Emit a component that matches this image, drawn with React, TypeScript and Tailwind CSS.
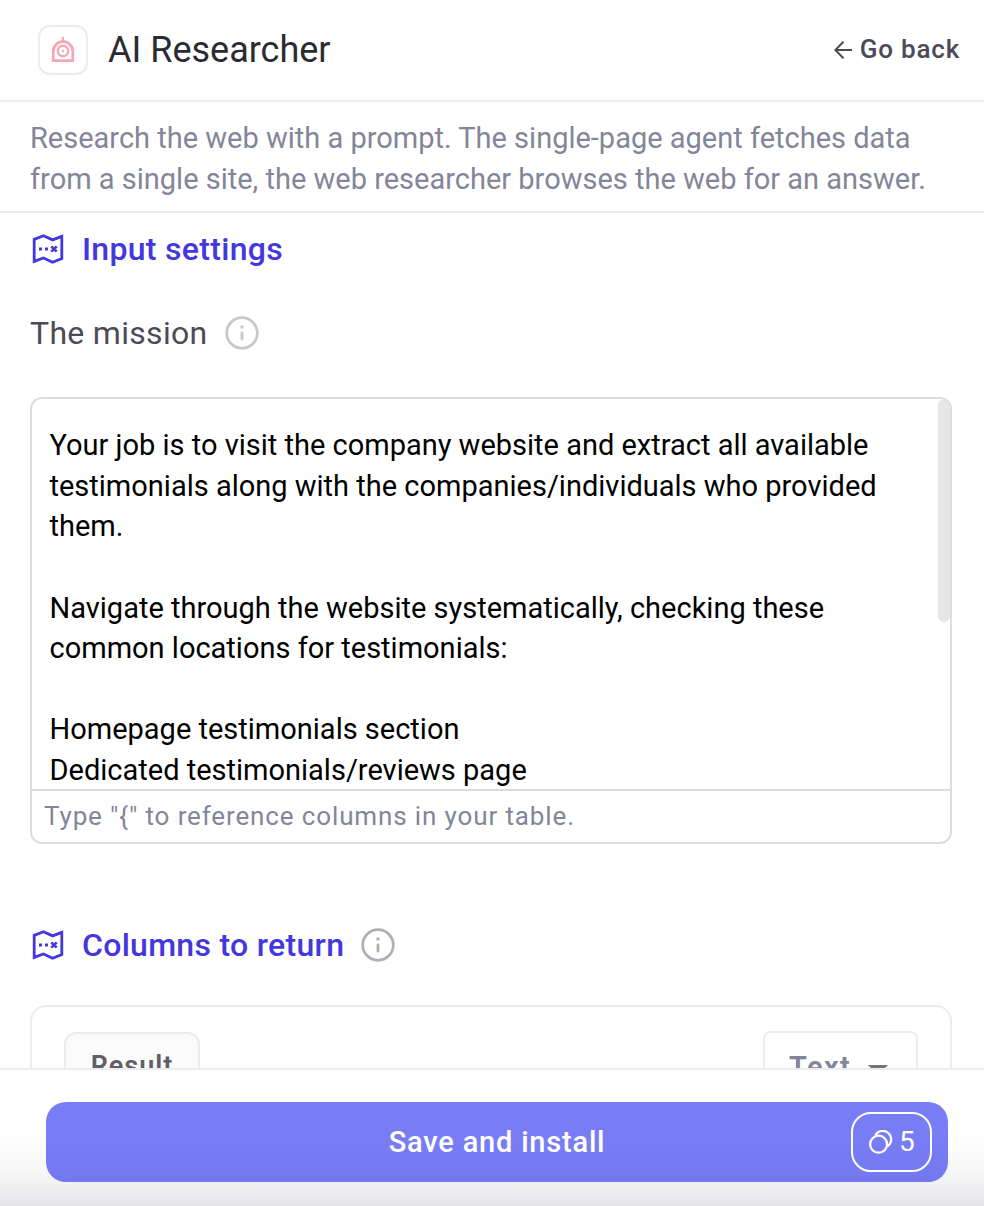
const mission = [
  'Your job is to visit the company website and extract all available',
  'testimonials along with the companies/individuals who provided',
  'them.',
  '',
  'Navigate through the website systematically, checking these',
  'common locations for testimonials:',
  '',
  'Homepage testimonials section',
  'Dedicated testimonials/reviews page',
].join('\n');

function RobotIcon() {
  return (
    <svg width="24" height="26" viewBox="0 0 24 26" fill="none" stroke="#f7a6b4" strokeWidth="2">
      <path d="M12 0V5" strokeWidth="2.2" />
      <path d="M2.2 23.6V14.5a9.8 9.8 0 0 1 19.6 0V23.6z" strokeWidth="2.8" />
      <circle cx="12" cy="14" r="5.2" strokeWidth="2.4" />
      <circle cx="12" cy="14" r="1.2" fill="#f7a6b4" stroke="none" />
    </svg>
  );
}

function MapIcon() {
  return (
    <svg width="32" height="32" viewBox="0 0 32 32" fill="none" stroke="#4338e0">
      <path d="M2.2 6.4L11.5 2.8L20.6 6.9L29.8 3.4V25.5L20.6 29.2L11.5 25L2.2 28.4z" strokeWidth="2.8" />
      <path d="M7 16h3M13 16h3" strokeWidth="2.8" />
      <path d="M19.3 13.3l5.4 5.4M24.7 13.3l-5.4 5.4" strokeWidth="2.6" />
    </svg>
  );
}

function InfoIcon({ color }: { color: string }) {
  return (
    <svg width="34" height="34" viewBox="0 0 34 34" fill="none" stroke={color}>
      <circle cx="17" cy="17" r="15.3" strokeWidth="2.7" />
      <circle cx="17" cy="11" r="1.7" fill={color} stroke="none" />
      <path d="M17 17v6" strokeWidth="2.8" strokeLinecap="round" />
    </svg>
  );
}

export default function App() {
  return (
    <div className="flex h-[1206px] w-[984px] flex-col overflow-hidden bg-white font-['Roboto',sans-serif]">
      <header className="flex h-[102px] shrink-0 items-center border-b-2 border-[#ebebf0] pr-6 pl-[38px]">
        <div className="flex size-[50px] items-center justify-center rounded-xl border-2 border-[#ebebf0]">
          <RobotIcon />
        </div>
        <h1 className="ml-5 text-[36px] leading-10 text-[#2b2b33]">AI Researcher</h1>
        <button className="mb-0.5 ml-auto flex items-center text-[26px] leading-8 font-medium tracking-[0.8px] text-[#4b4b57]">
          <svg className="mt-0.5 mr-2" width="18" height="18" viewBox="0 0 18 18" fill="none" stroke="#4b4b57" strokeWidth="2">
            <path d="M18 9H1.5M9.5 0.8L1.3 9l8.2 8.2" />
          </svg>
          Go back
        </button>
      </header>

      <p className="h-[111px] shrink-0 border-b-2 border-[#ebebf0] pt-4 pl-[30px] text-[29px] leading-[41px] whitespace-pre text-[#83869a]">
        {'Research the web with a prompt. The single-page agent fetches data\nfrom a single site, the web researcher browses the web for an answer.'}
      </p>

      <main className="flex h-[855px] shrink-0 flex-col overflow-hidden px-8 pl-[30px]">
        <div className="mt-4 flex h-10 shrink-0 items-center pl-0.5">
          <MapIcon />
          <h2 className="ml-[18px] text-[32px] leading-10 font-medium tracking-[0.3px] text-[#4338e0]">Input settings</h2>
        </div>
        <div className="mt-11 flex h-10 shrink-0 items-center">
          <span className="text-[32px] leading-10 tracking-[0.3px] text-[#4b4b57]">The mission</span>
          <span className="ml-[17px]"><InfoIcon color="#c6c6cc" /></span>
        </div>

        <div className="mt-11 flex h-[447px] shrink-0 flex-col overflow-hidden rounded-xl border-2 border-[#dcdce3]">
          <div className="flex h-[390px] shrink-0 justify-between overflow-hidden">
            <div className="pt-[26.2px] pl-[17.5px] text-[29px] leading-[40.6px] whitespace-pre text-black">{mission}</div>
            <div className="h-[223px] w-3 shrink-0 rounded-full bg-[#e6e6e6]" />
          </div>
          <div className="flex h-[53px] shrink-0 items-center border-t-2 border-[#dcdce3] pl-3 text-[26px] tracking-[0.87px] text-[#83869a]">
            Type "{'{'}" to reference columns in your table.
          </div>
        </div>

        <div className="mt-[81px] flex h-10 shrink-0 items-center pl-0.5">
          <MapIcon />
          <h2 className="ml-[18px] text-[32px] leading-10 font-medium tracking-[0.3px] text-[#4338e0]">Columns to return</h2>
          <span className="ml-[17px]"><InfoIcon color="#aeaeb6" /></span>
        </div>

        <div className="mt-10 flex h-[140px] shrink-0 items-start justify-between rounded-2xl border-2 border-[#ebebf0] px-8 pt-6">
          <div className="mt-px flex h-[69px] w-[136px] items-center justify-center rounded-xl border-2 border-[#ebebf0] bg-[#fbfbfb] text-[27px] font-semibold tracking-[1px] text-[#5f5f68]">
            Result
          </div>
          <div className="flex h-[70px] w-[155px] items-center rounded-lg border-2 border-[#ebebf0] pt-1 pl-6 text-[29px] font-semibold tracking-[1.4px] text-[#83869a]">
            Text
            <svg className="mt-1 ml-[17px]" width="20" height="10" viewBox="0 0 20 10">
              <path d="M0 0h20L10 10z" fill="#757575" />
            </svg>
          </div>
        </div>
      </main>

      <footer className="h-[138px] shrink-0 border-t-2 border-[#ebebf0] bg-linear-to-b from-white from-45% via-[#f7f7f8] via-75% to-[#e6e6e8] pt-8 pl-[46px]">
        <button className="grid h-20 w-[902px] grid-cols-[1fr_auto_1fr] items-center rounded-[20px] bg-linear-to-b from-[#787df6] from-50% to-[#7378ef] pr-4 pl-4 text-[29px] font-medium tracking-[0.8px] text-white">
          <span className="col-start-2 pt-0.5">Save and install</span>
          <span className="flex h-[60px] w-[81px] items-center justify-self-end rounded-[20px] border-2 border-white pl-4 text-[28px] font-normal tracking-normal">
            <svg className="mr-1.5" width="24" height="24" viewBox="0 0 24 24" fill="none" stroke="white" strokeWidth="2.2">
              <circle cx="9.6" cy="14.2" r="8.5" />
              <path d="M6.3 5.2A8.5 8.5 0 1 1 18.8 16.2" />
            </svg>
            5
          </span>
        </button>
      </footer>
    </div>
  );
}
